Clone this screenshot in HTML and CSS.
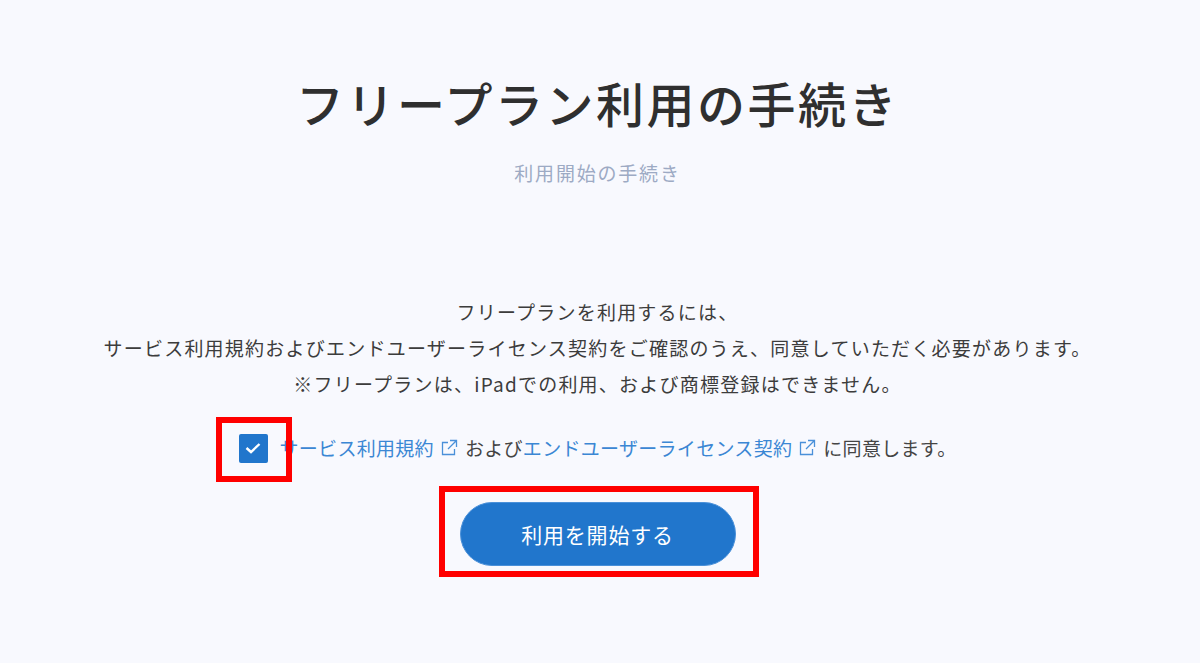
FILE: index.html
```html
<!doctype html>
<html lang="ja">
<head>
    <meta charset="UTF-8">
    <title>フリープラン利用の手続き</title>
    <link rel="stylesheet" href="styles.css">
</head>
<body>
<main class="page">
    <h1 class="title">フリープラン利用の手続き</h1>
    <p class="subtitle">利用開始の手続き</p>

    <div class="notice">
        <p>フリープランを利用するには、</p>
        <p>サービス利用規約およびエンドユーザーライセンス契約をご確認のうえ、同意していただく必要があります。</p>
        <p>※フリープランは、iPadでの利用、および商標登録はできません。</p>
    </div>

    <div class="agree">
        <span class="checkbox">
            <svg width="18" height="14" viewBox="0 0 18 14"><path d="M2.5 7 L7 11 L15.5 3" fill="none" stroke="#fff" stroke-width="2.4"/></svg>
            <span class="mark mark_check"></span>
        </span>
        <a class="link">サービス利用規約<svg class="ext" width="18" height="18" viewBox="0 0 18 18"><path d="M8 3.5 H2.5 V15.5 H14.5 V10 M10 1.5 H16.5 V8 M16.5 1.5 L8 10" fill="none" stroke="#4a90d9" stroke-width="1.3"/></svg></a>
        <span class="text">および</span><a class="link">エンドユーザーライセンス契約<svg class="ext" width="18" height="18" viewBox="0 0 18 18"><path d="M8 3.5 H2.5 V15.5 H14.5 V10 M10 1.5 H16.5 V8 M16.5 1.5 L8 10" fill="none" stroke="#4a90d9" stroke-width="1.3"/></svg></a>
        <span class="text">に同意します。</span>
    </div>

    <div class="actions">
        <button class="start_button">利用を開始する</button>
        <span class="mark mark_button"></span>
    </div>
</main>
</body>
</html>
```

FILE: styles.css
```css
* {
    box-sizing: border-box;
}

body {
    margin: 0;
    background-color: #f8f9fe;
    color: #3c3c3c;
    font-family: "Noto Sans CJK JP", "Noto Sans", sans-serif;
}

.page {
    display: flex;
    flex-direction: column;
    align-items: center;
    height: 663px;
    padding: 68px 5px 0 0;
    overflow: hidden;
}

.title {
    margin: 0;
    font-size: 48px;
    line-height: 68px;
    font-weight: 500;
    letter-spacing: 2.5px;
    color: #2f2f2f;
}

.subtitle {
    margin: 23px 0 0;
    font-size: 19px;
    line-height: 28px;
    letter-spacing: 1.8px;
    color: #9daac4;
}

.notice {
    margin-top: 107px;
    text-align: center;
    font-size: 19px;
    line-height: 36px;
    letter-spacing: 1.23px;
}

.notice p {
    margin: 0;
}

.agree {
    display: flex;
    align-items: center;
    margin-top: 31px;
    font-size: 19px;
    line-height: 30px;
    letter-spacing: 0.3px;
}

.checkbox {
    position: relative;
    display: flex;
    align-items: center;
    justify-content: center;
    width: 29px;
    height: 29px;
    margin-right: 12px;
    border-radius: 2px;
    background-color: #2176cc;
}

.link {
    display: flex;
    align-items: center;
    color: #3b87d4;
}

.ext {
    margin: 0 7px 0 6px;
}

.text {
    color: #444;
}

.actions {
    position: relative;
    margin-top: 39px;
}

.start_button {
    display: block;
    width: 276px;
    height: 64px;
    padding-bottom: 2px;
    border: 1px solid #4a90d9;
    border-radius: 32px;
    background-color: #2176cc;
    color: #fff;
    font-family: inherit;
    font-size: 21px;
    letter-spacing: 0.8px;
}

/* red annotation frames drawn over the screenshot */
.mark {
    position: absolute;
    border: 6px solid #f00;
}

.mark_check {
    top: -17px;
    left: -23px;
    width: 76px;
    height: 65px;
}

.mark_button {
    top: -16px;
    left: -21px;
    width: 320px;
    height: 91px;
}
```
